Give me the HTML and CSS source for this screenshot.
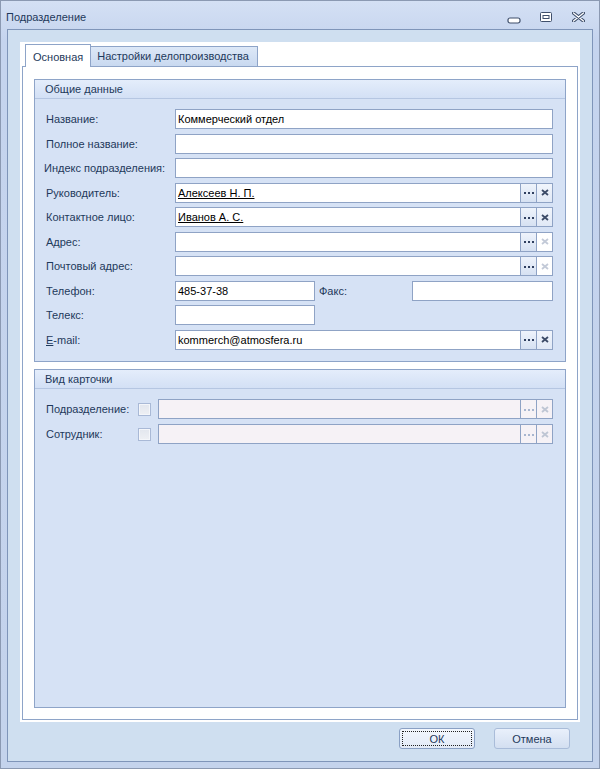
FILE: index.html
```html
<!DOCTYPE html>
<html lang="ru">
<head>
<meta charset="utf-8">
<title>Подразделение</title>
<link rel="stylesheet" href="styles.css">
</head>
<body>
<div class="window">
  <div class="titlebar">
    <span class="title">Подразделение</span>
    <span class="tb-btns">
      <svg class="tb-min" width="14" height="7" viewBox="0 0 14 7"><rect x="1" y="1" width="12" height="5" rx="2" fill="#fff" stroke="#3f4f6b" stroke-width="1.2"/></svg>
      <svg class="tb-max" width="12" height="10" viewBox="0 0 12 10"><rect x="0.5" y="0.5" width="11" height="9" rx="1" fill="#fff" stroke="#3f4f6b"/><rect x="3" y="3.5" width="6" height="3" fill="none" stroke="#3f4f6b"/></svg>
      <svg class="tb-close" width="13" height="10" viewBox="0 0 13 10"><path d="M1.5 1 L11.5 9 M11.5 1 L1.5 9" stroke="#3f4f6b" stroke-width="3.4" stroke-linecap="round"/><path d="M1.5 1 L11.5 9 M11.5 1 L1.5 9" stroke="#fff" stroke-width="1.3" stroke-linecap="round"/></svg>
    </span>
  </div>
  <div class="client">
    <div class="tabctl">
      <div class="tabs">
        <div class="tab active">Основная</div>
        <div class="tab">Настройки делопроизводства</div>
      </div>
      <div class="page">
        <div class="group g1">
          <div class="ghead">Общие данные</div>
          <div class="gbody form">
            <label class="lbl">Название:</label>
            <div class="edit">Коммерческий отдел</div>

            <label class="lbl">Полное название:</label>
            <div class="edit"></div>

            <label class="lbl lbl-wide">Индекс подразделения:</label>
            <div class="edit"></div>

            <label class="lbl">Руководитель:</label>
            <div class="lookup"><span class="val u">Алексеев Н. П.</span><span class="btn dots"><i></i><i></i><i></i></span><span class="btn clear"><svg width="8" height="7" viewBox="0 0 8 7"><path d="M1 1 L7 6 M7 1 L1 6" stroke="currentColor" stroke-width="1.8"/></svg></span></div>

            <label class="lbl">Контактное лицо:</label>
            <div class="lookup"><span class="val u">Иванов А. С.</span><span class="btn dots"><i></i><i></i><i></i></span><span class="btn clear"><svg width="8" height="7" viewBox="0 0 8 7"><path d="M1 1 L7 6 M7 1 L1 6" stroke="currentColor" stroke-width="1.8"/></svg></span></div>

            <label class="lbl">Адрес:</label>
            <div class="lookup"><span class="val"></span><span class="btn dots"><i></i><i></i><i></i></span><span class="btn clear off"><svg width="8" height="7" viewBox="0 0 8 7"><path d="M1 1 L7 6 M7 1 L1 6" stroke="currentColor" stroke-width="1.8"/></svg></span></div>

            <label class="lbl">Почтовый адрес:</label>
            <div class="lookup"><span class="val"></span><span class="btn dots"><i></i><i></i><i></i></span><span class="btn clear off"><svg width="8" height="7" viewBox="0 0 8 7"><path d="M1 1 L7 6 M7 1 L1 6" stroke="currentColor" stroke-width="1.8"/></svg></span></div>

            <label class="lbl">Телефон:</label>
            <div class="phone-row">
              <div class="edit short">485-37-38</div>
              <label class="lbl">Факс:</label>
              <div class="edit"></div>
            </div>

            <label class="lbl">Телекс:</label>
            <div class="phone-row">
              <div class="edit short"></div>
            </div>

            <label class="lbl"><span class="u">E</span>-mail:</label>
            <div class="lookup"><span class="val">kommerch@atmosfera.ru</span><span class="btn dots"><i></i><i></i><i></i></span><span class="btn clear"><svg width="8" height="7" viewBox="0 0 8 7"><path d="M1 1 L7 6 M7 1 L1 6" stroke="currentColor" stroke-width="1.8"/></svg></span></div>
          </div>
        </div>

        <div class="group g2">
          <div class="ghead">Вид карточки</div>
          <div class="gbody form2">
            <label class="lbl">Подразделение:</label>
            <span class="chk"></span>
            <div class="lookup dis"><span class="val"></span><span class="btn dots"><i></i><i></i><i></i></span><span class="btn clear off"><svg width="8" height="7" viewBox="0 0 8 7"><path d="M1 1 L7 6 M7 1 L1 6" stroke="currentColor" stroke-width="1.8"/></svg></span></div>

            <label class="lbl">Сотрудник:</label>
            <span class="chk"></span>
            <div class="lookup dis"><span class="val"></span><span class="btn dots"><i></i><i></i><i></i></span><span class="btn clear off"><svg width="8" height="7" viewBox="0 0 8 7"><path d="M1 1 L7 6 M7 1 L1 6" stroke="currentColor" stroke-width="1.8"/></svg></span></div>
          </div>
        </div>
      </div>
    </div>
    <div class="actions">
      <button class="pbtn ok"><span class="focus">ОК</span></button>
      <button class="pbtn">Отмена</button>
    </div>
  </div>
</div>
</body>
</html>
```

FILE: styles.css
```css
* { box-sizing: border-box; }

html, body {
  margin: 0;
  padding: 0;
}

body {
  width: 600px;
  height: 769px;
  font-family: "Liberation Sans", Arial, sans-serif;
  font-size: 11px;
  color: #1e395b;
  overflow: hidden;
}

.window {
  width: 600px;
  height: 769px;
  border: 1px solid #8b99b2;
  background: linear-gradient(#d4e0f4, #c5d4ee 40px, #c4d3ec);
  display: flex;
  flex-direction: column;
}

.titlebar {
  height: 28px;
  display: flex;
  align-items: center;
  padding: 4px 0 0 5px;
}

.title {
  font-size: 11px;
  color: #1e395b;
}

.tb-btns {
  margin-left: auto;
  display: flex;
  align-items: center;
  height: 20px;
}

.tb-min { margin-top: 7px; margin-right: 19px; }
.tb-max { margin-right: 20px; }
.tb-close { margin-right: 14px; }

.client {
  flex: 1;
  margin: 0 6px 6px 6px;
  border: 1px solid #7f95b9;
  background: #cfdff0;
  display: flex;
  flex-direction: column;
  padding: 12px 12px 12px 12px;
}

.tabctl {
  flex: 1;
  background: #fff;
  padding: 2px 2px 2px 2px;
  display: flex;
  flex-direction: column;
}

.tabs {
  display: flex;
  align-items: flex-end;
  padding-left: 3px;
  height: 22px;
  position: relative;
  z-index: 1;
}

.tab {
  height: 20px;
  border: 1px solid #8ea4c8;
  border-bottom: none;
  background: linear-gradient(#dde8f7, #c9d9f0);
  padding: 0 8px 0 6px;
  line-height: 19px;
  color: #1e395b;
  font-size: 11px;
}

.tab.active {
  height: 23px;
  background: #fff;
  padding: 0 7px 0 7px;
  line-height: 24px;
  margin-bottom: -1px;
}

.tab + .tab { border-left: none; }

.page {
  flex: 1;
  border: 1px solid #8ea4c8;
  background: #fff;
  padding: 12px 11px 11px 11px;
  display: flex;
  flex-direction: column;
  gap: 7px;
}

.group {
  border: 1px solid #8ea4c8;
  background: #d6e2f5;
  display: flex;
  flex-direction: column;
}

.g1 { height: 283px; }
.g2 { flex: 1; }

.ghead {
  height: 19px;
  line-height: 18px;
  padding-left: 10px;
  background: linear-gradient(#e4edfb, #d3e0f5);
  border-bottom: 1px solid #b5c6e2;
  color: #1e395b;
}

.gbody {
  padding: 10px 12px 0 11px;
}

.form {
  display: grid;
  grid-template-columns: 129px 1fr;
  grid-auto-rows: 20px;
  row-gap: 4.5px;
  align-items: center;
}

.form2 {
  display: grid;
  grid-template-columns: 92px 20px 1fr;
  grid-auto-rows: 20px;
  row-gap: 5px;
  align-items: center;
}

.lbl {
  color: #1e395b;
  white-space: nowrap;
}

.lbl-wide { margin-left: -2px; }

.u { text-decoration: underline; }

.edit {
  height: 20px;
  border: 1px solid #8fa3c5;
  background: #fff;
  color: #000;
  padding-left: 2px;
  line-height: 18px;
}

.phone-row {
  display: grid;
  grid-template-columns: 140px 91px 1fr;
  column-gap: 3px;
  align-items: center;
  height: 20px;
}

.phone-row .lbl { padding-left: 1px; }

.lookup {
  height: 20px;
  border: 1px solid #8fa3c5;
  background: #fff;
  display: flex;
  color: #000;
}

.lookup .val {
  flex: 1;
  padding-left: 2px;
  line-height: 18px;
}

.lookup .val.u { text-decoration: underline; }

.btn {
  width: 16px;
  border-left: 1px solid #8fa3c5;
  display: flex;
  align-items: center;
  justify-content: center;
}

.dots {
  background: linear-gradient(#eef3fb, #d6e1f2);
  gap: 2px;
  padding-top: 1px;
}

.dots i {
  width: 2px;
  height: 2px;
  background: #2f3f5f;
  display: block;
}

.clear {
  background: linear-gradient(#f1f5fc, #e1e9f6);
  color: #3c4b68;
}

.clear.off {
  background: #fff;
  color: #c3cad8;
}

.lookup.dis { background: #f6f2f6; }
.lookup.dis .dots { background: #f6f2f6; }
.lookup.dis .dots i { background: #a8b6cf; }
.lookup.dis .clear.off { background: #f6f2f6; color: #bfc6d4; }

.chk {
  width: 13px;
  height: 13px;
  border: 1px solid #a9b9d6;
  background: linear-gradient(#e2e6ee, #eef0f4);
  box-shadow: inset 0 0 0 1px #f4f6fa;
}

.actions {
  height: 21px;
  margin-top: 6px;
  display: flex;
  justify-content: flex-end;
  gap: 19px;
  padding-right: 10px;
}

.pbtn {
  width: 76px;
  height: 21px;
  border: 1px solid #a9bcd9;
  border-radius: 3px;
  background: linear-gradient(#e9f0fb, #d3dff1);
  font-family: "Liberation Sans", Arial, sans-serif;
  font-size: 11px;
  color: #1e395b;
  padding: 0;
  display: flex;
  align-items: center;
  justify-content: center;
}

.pbtn.ok {
  border-color: #8aa0c4;
  background: linear-gradient(#f3f7fd, #e2eaf7);
  padding: 2px;
}

.pbtn .focus {
  display: flex;
  align-items: center;
  justify-content: center;
  width: 100%;
  height: 100%;
  border: 1px dotted #222;
}
```
